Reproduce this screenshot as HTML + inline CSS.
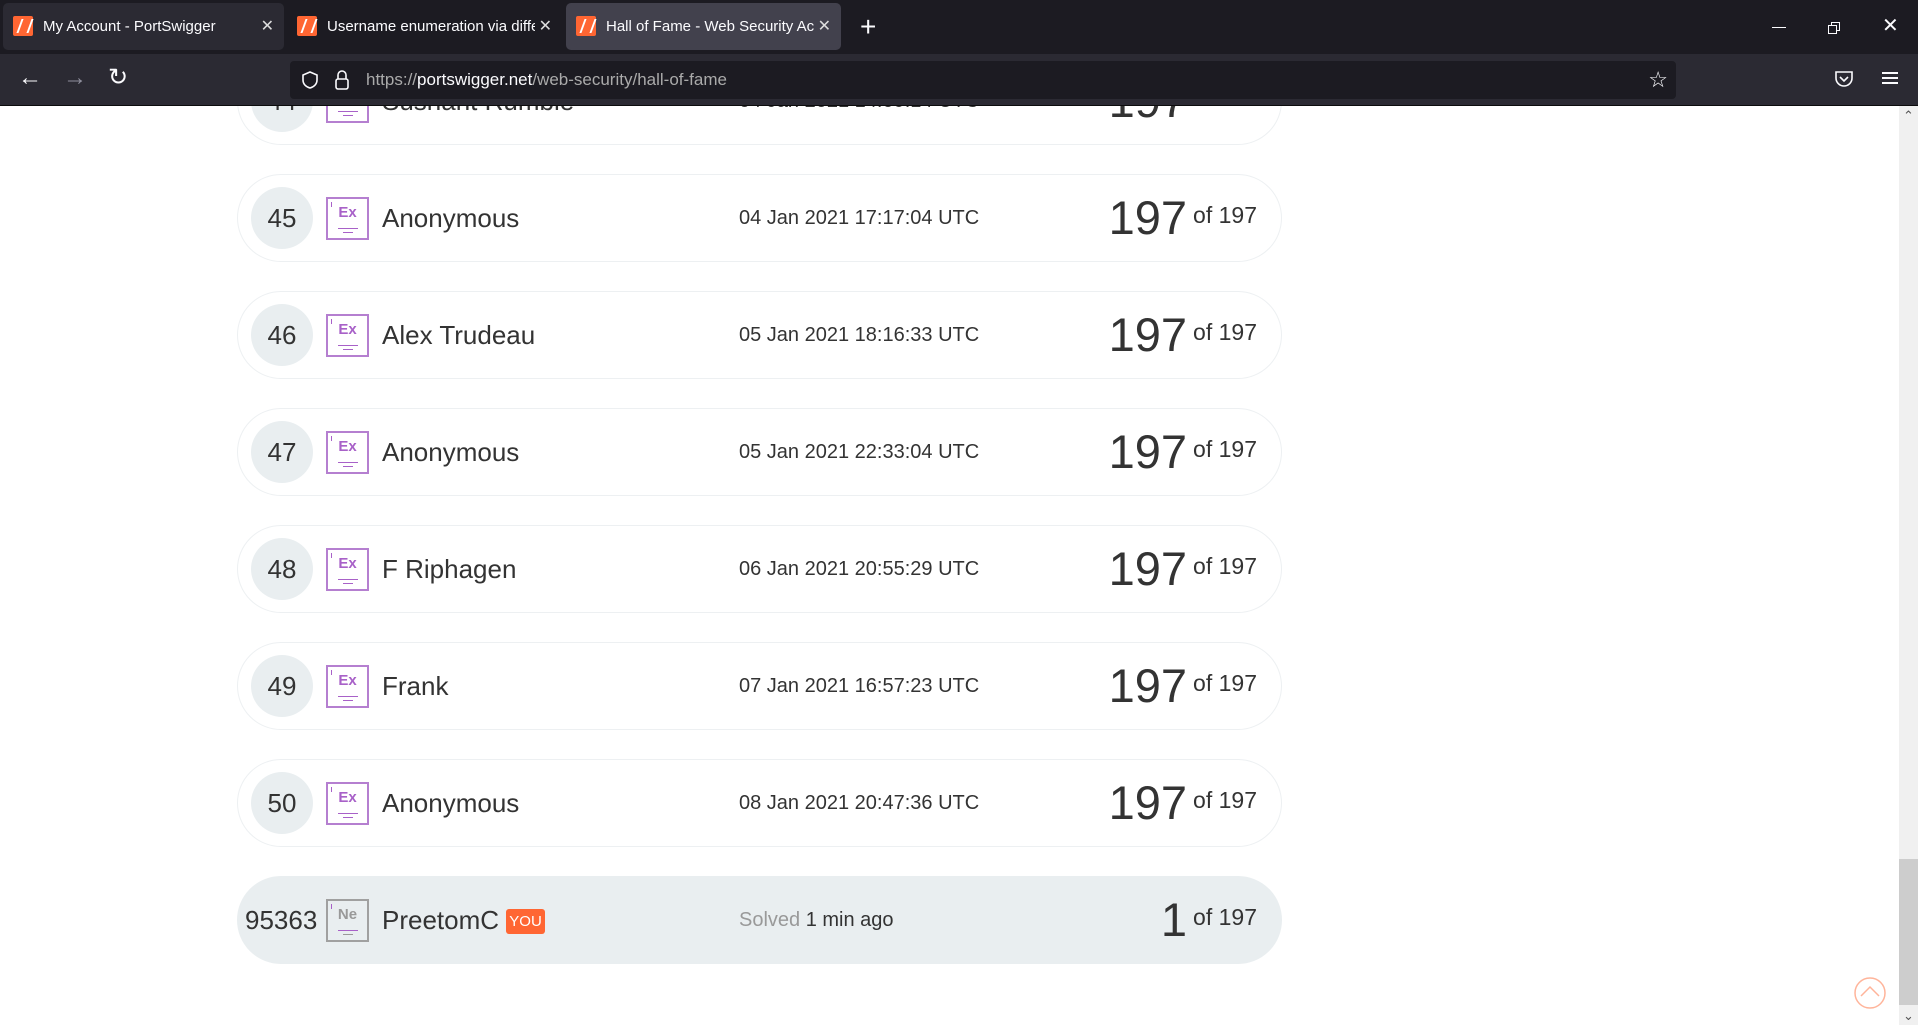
<!DOCTYPE html>
<html><head><meta charset="utf-8">
<style>
*{margin:0;padding:0;box-sizing:border-box}
body{width:1918px;height:1025px;overflow:hidden;background:#fff;font-family:"Liberation Sans",Arial,sans-serif;position:relative;color:#333}
.tabbar{position:absolute;left:0;top:0;width:1918px;height:54px;background:#1c1b22;z-index:5}
.tab{position:absolute;top:3px;height:47px;border-radius:5px;color:#fbfbfe;font-size:15px;line-height:47px;padding-left:40px;white-space:nowrap;overflow:hidden}
.tab .ico{position:absolute;left:10px;top:13px;width:20px;height:20px;background:#ff6633;border-radius:2px}
.tab .ico:after{content:"";position:absolute;left:6px;top:3px;width:8px;height:14px;border-left:2px solid #fff;border-right:2px solid #fff;transform:skewX(-20deg)}
.tab .x{position:absolute;right:10px;top:0;font-size:16px;color:#ddd}
.nav{position:absolute;left:0;top:54px;width:1918px;height:52px;background:#2b2a33;z-index:5;border-bottom:1px solid #0c0c0d}
.url{position:absolute;left:290px;top:7px;width:1386px;height:38px;background:#1c1b22;border-radius:4px;color:#aaa;font-size:17px;line-height:38px;padding-left:76px}
.url b{font-weight:normal;color:#fbfbfe}
.row{position:absolute;left:237px;width:1045px;height:88px;border:1px solid #edf0f2;border-radius:44px}
.row>*{position:absolute}
.num{left:13px;top:12px;width:62px;height:62px;border-radius:50%;background:#e9eef0;font-size:26px;line-height:62px;text-align:center;color:#333}
.el{left:88px;top:22px;width:43px;height:43px;border:2px solid #b57fd0;color:#a861c8;font-weight:bold;font-size:15px;text-align:center;line-height:28px}
.el:before{content:"";position:absolute;left:3px;top:3px;width:1px;height:5px;background:#a861c8}
.el:after{content:"";position:absolute;left:10px;top:29px;width:20px;height:1px;background:#a861c8}
.el i{position:absolute;left:15px;top:33px;width:10px;height:1px;background:#a861c8}
.name{left:144px;top:0;line-height:86px;font-size:26px;color:#333}
.date{left:501px;top:0;line-height:86px;font-size:20px;color:#333}
.score{right:24px;top:0;line-height:86px;white-space:nowrap}
.score .big{font-size:47px;vertical-align:middle}
.score .of{font-size:23px;margin-left:6px;vertical-align:middle;position:relative;top:-3px}
.me{background:#e9eef0;border-color:#e9eef0}
</style></head><body>
<div class="tabbar">
 <div class="tab" style="left:3px;width:281px;background:#2b2a33"><span class="ico"></span>My Account - PortSwigger<span class="x">✕</span></div>
 <div class="tab" style="left:287px;width:275px"><span class="ico"></span>Username enumeration via diffe<span class="x" style="background:#1c1b22;padding-left:4px">✕</span></div>
 <div class="tab" style="left:566px;width:275px;background:#42414d"><span class="ico"></span>Hall of Fame - Web Security Aca<span class="x" style="background:#42414d;padding-left:4px">✕</span></div>
 <div style="position:absolute;left:860px;top:10px;color:#fbfbfe;font-size:28px;line-height:34px">+</div>
 <div style="position:absolute;left:1772px;top:27px;width:14px;height:1px;background:#fbfbfe"></div>
 <div style="position:absolute;left:1831px;top:22px;width:9px;height:9px;border:1px solid #fbfbfe"></div>
 <div style="position:absolute;left:1828px;top:25px;width:9px;height:9px;border:1px solid #fbfbfe;background:#1c1b22"></div>
 <div style="position:absolute;left:1882px;top:13px;color:#fbfbfe;font-size:20px">✕</div>
</div>
<div class="nav">
 <div style="position:absolute;left:18px;top:10px;color:#fbfbfe;font-size:24px">←</div>
 <div style="position:absolute;left:63px;top:10px;color:#8f8f9d;font-size:24px">→</div>
 <div style="position:absolute;left:108px;top:9px;color:#fbfbfe;font-size:24px">↻</div>
 <div class="url"><svg style="position:absolute;left:10px;top:9px" width="20" height="20" viewBox="0 0 20 20"><path d="M10 2L3 5v5c0 4 3 7 7 8 4-1 7-4 7-8V5z" fill="none" stroke="#fbfbfe" stroke-width="1.6"/></svg><svg style="position:absolute;left:44px;top:8px" width="16" height="22" viewBox="0 0 16 22"><path d="M4 10V6a4 4 0 018 0v4" fill="none" stroke="#fbfbfe" stroke-width="1.6"/><rect x="2" y="10" width="12" height="10" rx="2" fill="none" stroke="#fbfbfe" stroke-width="1.6"/></svg>https://<b>portswigger.net</b>/web-security/hall-of-fame
 <div style="position:absolute;right:8px;top:0;color:#fbfbfe;font-size:22px">☆</div></div>
 <svg style="position:absolute;left:1834px;top:14px" width="20" height="20" viewBox="0 0 20 20"><path d="M2 4h16v6a8 8 0 01-16 0z" fill="none" stroke="#fbfbfe" stroke-width="1.6"/><path d="M6 9l4 4 4-4" fill="none" stroke="#fbfbfe" stroke-width="1.6"/></svg>
 <div style="position:absolute;left:1882px;top:18px;width:16px;height:2px;background:#fbfbfe;box-shadow:0 5px 0 #fbfbfe,0 10px 0 #fbfbfe"></div>
</div>

<div class="row" style="top:57px"><div class="num">44</div><div class="el">Ex<i></i></div><div class="name">Sushant Rumble</div><div class="date">04 Jan 2021 14:09:14 UTC</div><div class="score"><span class="big">197</span><span class="of">of 197</span></div></div>
<div class="row" style="top:174px"><div class="num">45</div><div class="el">Ex<i></i></div><div class="name">Anonymous</div><div class="date">04 Jan 2021 17:17:04 UTC</div><div class="score"><span class="big">197</span><span class="of">of 197</span></div></div>
<div class="row" style="top:291px"><div class="num">46</div><div class="el">Ex<i></i></div><div class="name">Alex Trudeau</div><div class="date">05 Jan 2021 18:16:33 UTC</div><div class="score"><span class="big">197</span><span class="of">of 197</span></div></div>
<div class="row" style="top:408px"><div class="num">47</div><div class="el">Ex<i></i></div><div class="name">Anonymous</div><div class="date">05 Jan 2021 22:33:04 UTC</div><div class="score"><span class="big">197</span><span class="of">of 197</span></div></div>
<div class="row" style="top:525px"><div class="num">48</div><div class="el">Ex<i></i></div><div class="name">F Riphagen</div><div class="date">06 Jan 2021 20:55:29 UTC</div><div class="score"><span class="big">197</span><span class="of">of 197</span></div></div>
<div class="row" style="top:642px"><div class="num">49</div><div class="el">Ex<i></i></div><div class="name">Frank</div><div class="date">07 Jan 2021 16:57:23 UTC</div><div class="score"><span class="big">197</span><span class="of">of 197</span></div></div>
<div class="row" style="top:759px"><div class="num">50</div><div class="el">Ex<i></i></div><div class="name">Anonymous</div><div class="date">08 Jan 2021 20:47:36 UTC</div><div class="score"><span class="big">197</span><span class="of">of 197</span></div></div>
<div class="row me" style="top:876px"><div class="num" style="left:7px;width:72px;background:none">95363</div><div class="el" style="border-color:#a0a0a0;color:#999">Ne<i style="background:#999"></i></div><div class="name">PreetomC <span style="background:#ff6633;color:#fff;font-size:15px;padding:4px 3px;border-radius:3px;vertical-align:3px">YOU</span></div><div class="date"><span style="color:#999">Solved</span> 1 min ago</div><div class="score"><span class="big">1</span><span class="of">of 197</span></div></div>

<div style="position:absolute;left:1899px;top:106px;width:19px;height:919px;background:#f0f0f0"></div>
<div style="position:absolute;left:1899px;top:859px;width:19px;height:146px;background:#cdcdcd"></div>
<div style="position:absolute;left:1903px;top:108px;color:#555;font-size:13px">⌃</div>
<div style="position:absolute;left:1903px;top:1008px;color:#555;font-size:13px">⌄</div>
<svg style="position:absolute;left:1854px;top:977px" width="32" height="32" viewBox="0 0 32 32"><circle cx="16" cy="16" r="15" fill="none" stroke="#ffb49a" stroke-width="1.5"/><path d="M7 19l9-9 9 9" fill="none" stroke="#ffb49a" stroke-width="1.5"/></svg>
</body></html>
